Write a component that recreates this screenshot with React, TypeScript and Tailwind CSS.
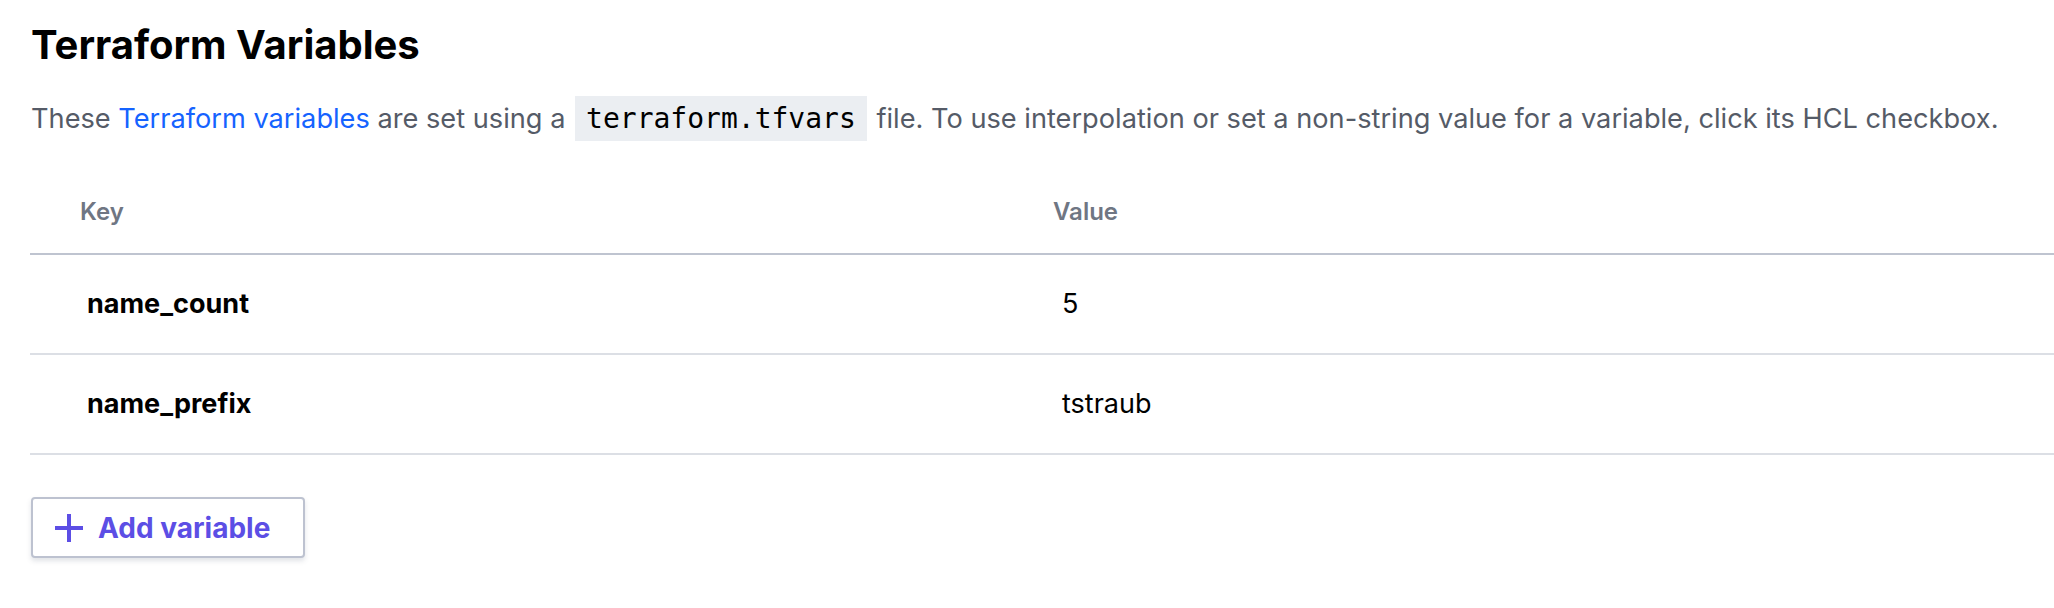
import React from "react";

const PlusIcon = () => (
  <svg width="28" height="28" viewBox="0 0 28 28" fill="none" aria-hidden="true">
    <path d="M14 0V28M0 14H28" stroke="#5c4ee5" strokeWidth="4" />
  </svg>
);

const rows = [
  { key: "name_count", value: "5" },
  { key: "name_prefix", value: "tstraub" },
];

export default function App() {
  return (
    <div
      className="min-h-screen bg-white pl-[31px] pt-[21px]"
      style={{ fontFamily: "Inter, 'Noto Sans', sans-serif" }}
    >
      <h1 className="text-[40px] font-bold leading-[48px] text-black">Terraform Variables</h1>
      <p className="mt-[30px] whitespace-nowrap text-[27.2px] leading-[40px] text-[#555b67]">
        These <a className="text-[#1563ff]">Terraform variables</a> are set using a{" "}
        <code
          className="mx-[2px] bg-[#ebeef2] px-[11px] py-[6px] text-[28px] text-black"
          style={{ fontFamily: "'DejaVu Sans Mono', monospace" }}
        >
          terraform.tfvars
        </code>{" "}
        file. To use interpolation or set a non-string value for a variable, click its HCL checkbox.
      </p>

      <div className="ml-[-1px]">
        <div className="flex border-b-2 border-[#bfc4d0] pb-[25px] pt-[57px] text-[24px] font-semibold leading-[32px] text-[#6f7683]">
          <div className="w-[973px] shrink-0 pl-[50px]">Key</div>
          <div className="pl-[50px]">Value</div>
        </div>
        {rows.map((r) => (
          <div
            key={r.key}
            className="box-border flex h-[100px] items-center border-b-2 border-[#dcdfe5] text-[27px] leading-[36px] text-black"
          >
            <div className="w-[973px] shrink-0 pl-[57px] font-bold">{r.key}</div>
            <div className="pl-[59px]">{r.value}</div>
          </div>
        ))}
      </div>

      <button
        type="button"
        className="mt-[42px] box-border flex h-[61px] w-[274px] items-center gap-[15px] rounded-[4px] border-2 border-[#bdc2d0] bg-white pl-[22px] shadow-[0_3px_5px_rgba(90,100,120,0.18)]"
      >
        <PlusIcon />
        <span className="text-[28px] font-bold leading-[36px] text-[#5c4ee5]">Add variable</span>
      </button>
    </div>
  );
}
